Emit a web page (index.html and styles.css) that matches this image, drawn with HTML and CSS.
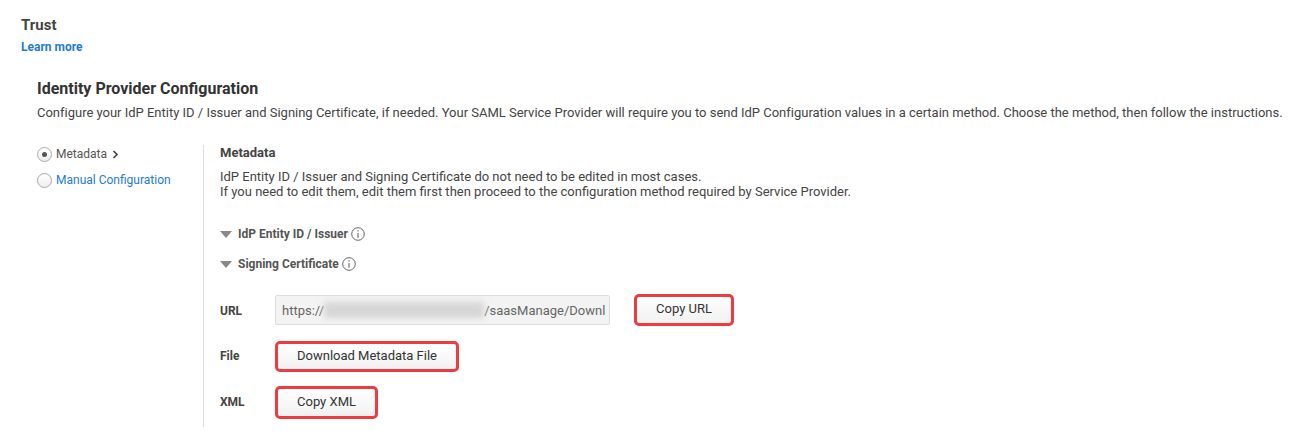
FILE: index.html
```html
<!DOCTYPE html>
<html lang="en">
<head>
<meta charset="utf-8">
<title>Trust</title>
<link rel="stylesheet" href="styles.css">
</head>
<body>
<h2 class="trust">Trust</h2>
<a class="learn" href="#">Learn more</a>
<section class="idp">
  <h3 class="idp-title">Identity Provider Configuration</h3>
  <p class="idp-desc">Configure your IdP Entity ID / Issuer and Signing Certificate, if needed. Your SAML Service Provider will require you to send IdP Configuration values in a certain method. Choose the method, then follow the instructions.</p>
  <div class="columns">
    <nav class="methods">
      <div class="method">
        <span class="radio radio-on"></span><span class="method-label">Metadata</span>
        <svg class="chev" width="7" height="9" viewBox="0 0 7 9"><path d="M1.5 1l3.5 3.5L1.5 8" fill="none" stroke="#444" stroke-width="1.7"/></svg>
      </div>
      <div class="method">
        <span class="radio"></span><a class="method-link" href="#">Manual Configuration</a>
      </div>
    </nav>
    <div class="panel">
      <h4 class="panel-title">Metadata</h4>
      <p class="panel-text">IdP Entity ID / Issuer and Signing Certificate do not need to be edited in most cases.<br>If you need to edit them, edit them first then proceed to the configuration method required by Service Provider.</p>
      <div class="disclosure first">
        <span class="tri"></span><span class="dis-label">IdP Entity ID / Issuer</span>
        <svg class="info" width="14" height="14" viewBox="0 0 14 14"><circle cx="7" cy="7" r="6.3" fill="none" stroke="#666"/><path d="M7 3.2v1.4M7 6v4.8" stroke="#666" stroke-width="1.1"/></svg>
      </div>
      <div class="disclosure">
        <span class="tri"></span><span class="dis-label">Signing Certificate</span>
        <svg class="info" width="14" height="14" viewBox="0 0 14 14"><circle cx="7" cy="7" r="6.3" fill="none" stroke="#666"/><path d="M7 3.2v1.4M7 6v4.8" stroke="#666" stroke-width="1.1"/></svg>
      </div>
      <div class="row row-url">
        <span class="row-label">URL</span>
        <div class="url-field"><span>https://</span><span class="blur"></span><span>/saasManage/Downl</span></div>
        <button class="btn marked copy-url">Copy URL</button>
      </div>
      <div class="row row-file">
        <span class="row-label">File</span>
        <button class="btn marked download">Download Metadata File</button>
      </div>
      <div class="row row-xml">
        <span class="row-label">XML</span>
        <button class="btn marked copy-xml">Copy XML</button>
      </div>
    </div>
  </div>
</section>
</body>
</html>
```
FILE: styles.css
```css
* { box-sizing: border-box; }
html, body { margin: 0; height: 439px; overflow: hidden; background: #fff; }
body { padding: 17px 0 0 21px; font-family: Roboto, "Liberation Sans", sans-serif; font-size: 13px; color: #444; }
h2, h3, h4, p { margin: 0; }
.trust { font-size: 15px; line-height: 17px; font-weight: 700; color: #444; }
.learn { display: block; margin-top: 7px; font-size: 12px; line-height: 13px; font-weight: 700; color: #1f7ad6; text-decoration: none; }
.idp { margin: 26px 0 0 16px; }
.idp-title { font-size: 16px; line-height: 18px; font-weight: 700; color: #333; }
.idp-desc { margin-top: 7px; line-height: 16px; white-space: nowrap; letter-spacing: -0.009px; color: #444; }
.columns { display: flex; margin-top: 24px; }
.methods { width: 166px; flex: none; padding-top: 1px; }
.method { display: flex; align-items: center; height: 16px; margin-bottom: 10px; font-size: 12px; color: #555; }
.radio { width: 15px; height: 15px; margin-right: 4px; border: 1px solid #aaa; border-radius: 50%; background: linear-gradient(#fff, #eee); position: relative; flex: none; }
.radio-on::after { content: ""; position: absolute; left: 4px; top: 4px; width: 5px; height: 5px; border-radius: 50%; background: #555; }
.method-label { color: #555; }
.chev { margin-left: 5px; }
.method-link { color: #1f7ad6; text-decoration: none; }
.panel { border-left: 1px solid #ddd; padding-left: 16px; height: 282px; flex: none; width: 1000px; }
.panel-title { font-size: 13px; line-height: 16px; font-weight: 700; color: #444; }
.panel-text { margin-top: 8px; line-height: 15px; color: #444; }
.disclosure { display: flex; align-items: center; height: 16px; margin-top: 14px; font-size: 12px; font-weight: 700; color: #555; }
.disclosure.first { margin-top: 27px; }
.tri { width: 0; height: 0; margin-right: 6px; border-left: 6px solid transparent; border-right: 6px solid transparent; border-top: 7px solid #888; }
.info { margin-left: 3px; }
.row { display: flex; align-items: center; }
.row-label { width: 55px; flex: none; font-size: 12px; font-weight: 700; color: #444; }
.row-url { margin-top: 22px; height: 32px; }
.row-url .row-label { padding-top: 2px; }
.row-file { margin-top: 15px; height: 31px; }
.row-file .row-label { padding-bottom: 2px; }
.row-xml { margin-top: 14px; height: 33px; }
.row-xml .row-label { padding-bottom: 2px; }
.url-field { display: flex; align-items: center; width: 335px; height: 30px; padding-left: 6px; border: 1px solid #ddd; border-radius: 2px; background: #f3f3f3; color: #666; overflow: hidden; white-space: nowrap; }
.blur { width: 160px; height: 16px; background: #d6d6d6; filter: blur(3px); flex: none; }
.btn { height: 32px; font: 13px Roboto, "Liberation Sans", sans-serif; color: #333; background: linear-gradient(#fff, #f1f1f1); padding: 0 0 2px; border-radius: 5px; }
.marked { border: 3px solid #ee3b40; }
.copy-url { width: 100px; margin-left: 24px; padding-bottom: 4px; }
.download { width: 184px; height: 31px; }
.copy-xml { width: 103px; height: 33px; }
```
